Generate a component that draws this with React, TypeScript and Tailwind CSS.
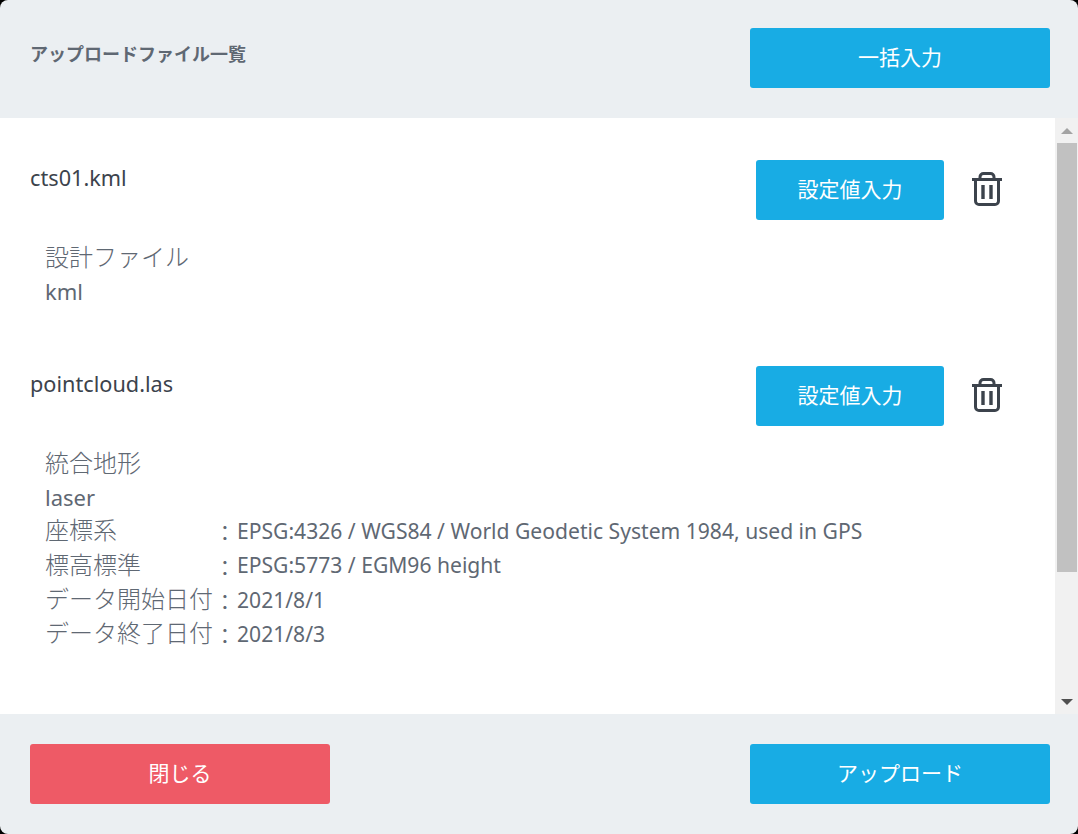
import React from 'react';

const FONT = "font-['Noto_Sans','Noto_Sans_CJK_JP',sans-serif]";

function TrashIcon() {
  return (
    <svg width="30" height="34" viewBox="0 0 30 34" fill="none" stroke="#3c434c" strokeWidth="3">
      <path d="M0 7.5H30" />
      <path d="M8 6V5a3.5 3.5 0 0 1 3.5-3.5h7A3.5 3.5 0 0 1 22 5v1" />
      <path d="M3.5 7.5V29a3.5 3.5 0 0 0 3.5 3.5h16a3.5 3.5 0 0 0 3.5-3.5V7.5" />
      <path d="M11 13V27M19 13V27" strokeWidth="3.4" />
    </svg>
  );
}

function ActionButton({ label, className }: { label: string; className: string }) {
  return (
    <button className={`h-[60px] rounded-[3px] text-white text-[21px] flex items-center justify-center ${className}`}>
      {label}
    </button>
  );
}

function FileRow({ name, children, height }: { name: string; children: React.ReactNode; height: string }) {
  return (
    <div className={height}>
      <div className="flex items-start justify-between">
        <div className="text-[21.7px] leading-[36px] text-[#3c434c]">{name}</div>
        <div className="flex items-center">
          <ActionButton label="設定値入力" className="w-[188px] bg-[#18ace4]" />
          <div className="ml-[28px] mr-[53px] mb-[2px]">
            <TrashIcon />
          </div>
        </div>
      </div>
      <div className="mt-[19px] pl-[15px] text-[#5f6873]">{children}</div>
    </div>
  );
}

function Line({ children }: { children: React.ReactNode }) {
  return <div className="text-[22px] leading-[34.3px] -mt-[1px] whitespace-nowrap">{children}</div>;
}

function Field({ label, value }: { label: string; value: string }) {
  return (
    <div className="flex items-center h-[34.3px] whitespace-nowrap">
      <span className="w-[168px] text-[24px] font-light -translate-y-[1px]">{label}</span>
      <span className="w-[24px] text-center text-[20.8px] pt-[5px]">：</span>
      <span className="text-[21.1px] pb-[1px]">{value}</span>
    </div>
  );
}

export default function App() {
  return (
    <div lang="ja" className={`w-[1078px] h-[834px] bg-black ${FONT}`}>
      <div className="h-full rounded-[8px] overflow-hidden bg-[#ebeff2] flex flex-col">
        <header className="h-[118px] shrink-0 flex items-start justify-between pl-[30px] pr-[28px] pt-[28px]">
          <h1 className="text-[18px] leading-[52px] font-bold text-[#5f6873]">アップロードファイル一覧</h1>
          <ActionButton label="一括入力" className="w-[300px] bg-[#18ace4]" />
        </header>

        <main className="flex-1 flex min-h-0 bg-white">
          <div className="flex-1 pt-[42px] pl-[30px]">
            <FileRow name="cts01.kml" height="h-[206px]">
              <div className="text-[24px] font-light leading-[36px]">設計ファイル</div>
              <Line>kml</Line>
            </FileRow>
            <FileRow name="pointcloud.las" height="h-[300px]">
              <div className="text-[24px] font-light leading-[36px]">統合地形</div>
              <Line>laser</Line>
              <Field label="座標系" value="EPSG:4326 / WGS84 / World Geodetic System 1984, used in GPS" />
              <Field label="標高標準" value="EPSG:5773 / EGM96 height" />
              <Field label="データ開始日付" value="2021/8/1" />
              <Field label="データ終了日付" value="2021/8/3" />
            </FileRow>
          </div>

          {/* scrollbar */}
          <div className="w-[23px] shrink-0 bg-[#f1f1f1] flex flex-col items-center">
            <div className="h-[25px] w-full flex items-center justify-center">
              <div className="w-0 h-0 border-x-[6px] border-x-transparent border-b-[6px] border-b-[#a3a3a3]" />
            </div>
            <div className="h-[429px] w-[20px] ml-[1px] bg-[#c1c1c1]" />
            <div className="flex-1" />
            <div className="h-[25px] w-full flex items-center justify-center">
              <div className="w-0 h-0 border-x-[6px] border-x-transparent border-t-[6px] border-t-[#505050]" />
            </div>
          </div>
        </main>

        <footer className="h-[120px] shrink-0 flex items-start justify-between pl-[30px] pr-[28px] pt-[30px]">
          <ActionButton label="閉じる" className="w-[300px] bg-[#ee5a66]" />
          <ActionButton label="アップロード" className="w-[300px] bg-[#18ace4]" />
        </footer>
      </div>
    </div>
  );
}
